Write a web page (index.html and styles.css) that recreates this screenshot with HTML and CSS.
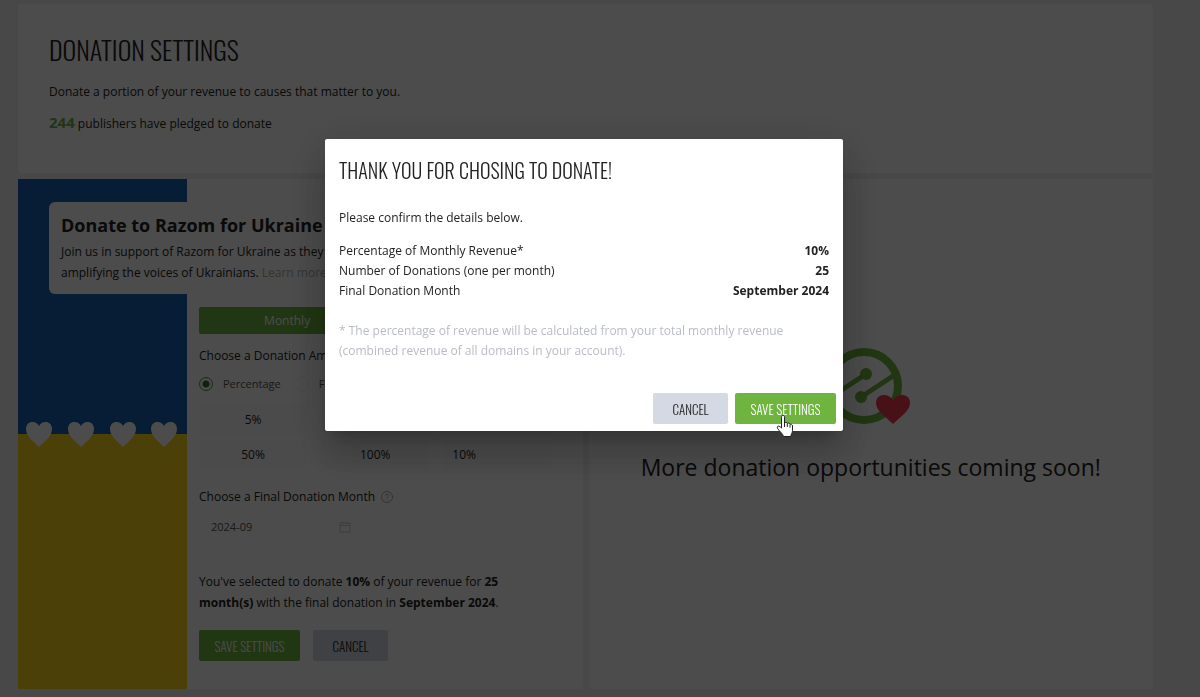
FILE: index.html
```html
<!DOCTYPE html>
<html lang="en">
<head>
    <meta charset="UTF-8">
    <meta name="viewport" content="width=device-width, initial-scale=1.0">
    <title>Donation Settings</title>
    <link rel="stylesheet" href="styles.css">
</head>
<body>
    <main class="page">
        <section class="card intro">
            <h1>Donation Settings</h1>
            <p>Donate a portion of your revenue to causes that matter to you.</p>
            <p><strong class="count">244</strong> publishers have pledged to donate</p>
        </section>

        <div class="columns">
            <section class="card campaign">
                <div class="flag">
                    <svg class="hearts" viewBox="0 0 169 27" aria-hidden="true">
                        <defs>
                            <path id="heart" d="M14 26C8 20 1 15 1 8C1 3.500 4 1 7.500 1C10.500 1 12.500 2.500 14 5C15.500 2.500 17.500 1 20.500 1C24 1 27 3.500 27 8C27 15 20 20 14 26Z"/>
                        </defs>
                        <use href="#heart" x="7"/>
                        <use href="#heart" x="49"/>
                        <use href="#heart" x="91"/>
                        <use href="#heart" x="132"/>
                    </svg>
                </div>

                <header class="campaign-header">
                    <h2>Donate to Razom for Ukraine</h2>
                    <p>Join us in support of Razom for Ukraine as they are<br>amplifying the voices of Ukrainians. <a href="#">Learn more</a></p>
                </header>

                <form class="campaign-form">
                    <div class="tabs">
                        <button type="button" class="tab active">Monthly</button>
                        <button type="button" class="tab">One Time</button>
                    </div>

                    <p class="field-title">Choose a Donation Amount</p>
                    <div class="radios">
                        <label><input type="radio" name="kind" checked> Percentage</label>
                        <label><input type="radio" name="kind"> Fixed</label>
                    </div>
                    <div class="amounts">
                        <button type="button">5%</button>
                        <button type="button">10%</button>
                        <button type="button">25%</button>
                        <button type="button">50%</button>
                        <button type="button">100%</button>
                        <input type="text" value="10%" aria-label="Other amount">
                    </div>

                    <label class="field-title" for="month">Choose a Final Donation Month
                        <svg class="help" viewBox="0 0 12 12" aria-hidden="true">
                            <circle cx="6" cy="6" r="5.500"/>
                            <path d="M4.500 4.700C4.500 2.700 7.600 2.700 7.600 4.600C7.600 5.800 6 5.800 6 7.200M6 8.300V9.200"/>
                        </svg>
                    </label>
                    <div class="month">
                        <input type="text" id="month" value="2024-09">
                        <svg viewBox="0 0 12 12" aria-hidden="true">
                            <path d="M1 2H11V11H1ZM1 4.500H11M3.500 0.500V2.500M8.500 0.500V2.500"/>
                        </svg>
                    </div>

                    <p class="summary">You've selected to donate <strong>10%</strong> of your revenue for <strong>25<br>month(s)</strong> with the final donation in <strong>September 2024</strong>.</p>

                    <div class="actions">
                        <button type="button" class="btn btn-save">Save Settings</button>
                        <button type="button" class="btn btn-cancel">Cancel</button>
                    </div>
                </form>
            </section>

            <section class="card upcoming">
                <svg class="gauge" viewBox="0 0 88 78" aria-hidden="true">
                    <circle class="ring" cx="37" cy="39" r="34"/>
                    <path class="needle" d="M7 48L39 27M34 50L66 29"/>
                    <circle class="dot" cx="39" cy="27" r="6"/>
                    <circle class="dot" cx="34" cy="50" r="6"/>
                    <path class="heart" d="M66 77C58 69 49 64 49 56C49 50 53 48 57 48C61 48 64 50 66 53C68 50 71 48 75 48C79 48 83 50 83 56C83 64 74 69 66 77Z"/>
                </svg>
                <p>More donation opportunities coming soon!</p>
            </section>
        </div>
    </main>

    <div class="overlay">
        <div class="modal" role="dialog" aria-labelledby="modal-title">
            <h2 id="modal-title">Thank you for chosing to donate!</h2>
            <p>Please confirm the details below.</p>
            <table>
                <tbody>
                    <tr><th scope="row">Percentage of Monthly Revenue*</th><td>10%</td></tr>
                    <tr><th scope="row">Number of Donations (one per month)</th><td>25</td></tr>
                    <tr><th scope="row">Final Donation Month</th><td>September 2024</td></tr>
                </tbody>
            </table>
            <p class="note">* The percentage of revenue will be calculated from your total monthly revenue<br>(combined revenue of all domains in your account).</p>
            <div class="modal-actions">
                <button type="button" class="btn btn-cancel">Cancel</button>
                <button type="button" class="btn btn-save">Save Settings
                    <svg class="pointer" viewBox="0 0 18 24" aria-hidden="true">
                        <path d="M5.500 14V3.200C5.500 0.800 8.500 0.800 8.500 3.200V9C9 7.800 11.200 8 11.300 9.600C12 8.500 14 9 14 10.500C14.800 9.800 16.500 10.300 16.500 12V16.500C16.500 19 15 20 14.800 22.500H7.500C7 20 4 18 1.500 14.300C0.500 12.500 2.600 11.300 4 12.600Z"/>
                        <path d="M8.500 9V13M11.300 9.800V13M14 10.800V13.500"/>
                    </svg>
                </button>
            </div>
        </div>
    </div>
</body>
</html>
```
FILE: styles.css
```css
* {
    box-sizing: border-box;
}
body {
    margin: 0;
    background-color: #f1f1f1;
    color: #222;
    font-family: "Open Sans", "Noto Sans", sans-serif;
    font-size: 12px;
    line-height: 20px;
}
h1, h2, p {
    margin: 0;
}
button, input {
    font: inherit;
    color: inherit;
}
.page {
    padding: 4px 47px 8px 18px;
}
.card {
    background-color: white;
    border-radius: 4px;
}
.intro {
    min-height: 169px;
    padding: 30px 31px;
}
.intro h1 {
    font-family: Oswald, "Roboto Condensed", sans-serif;
    font-size: 26px;
    font-weight: 300;
    line-height: 32px;
    text-transform: uppercase;
    margin-bottom: 15px;
}
.intro p {
    line-height: 22px;
    margin-bottom: 8px;
}
.count {
    color: #6eb43f;
    font-size: 15px;
}
.columns {
    display: grid;
    grid-template-columns: 1fr 1fr;
    gap: 6px;
    margin-top: 6px;
}

/* left card: the flag strip runs behind the campaign header */
.campaign {
    display: grid;
    grid-template-columns: 31px 138px 12px 1fr;
    grid-template-rows: 23px auto 1fr;
    padding-right: 31px;
}
.flag {
    grid-column: 1 / 3;
    grid-row: 1 / 4;
    display: flex;
    align-items: center;
    background: linear-gradient(#1a62b4 50%, #fcd51a 50%);
}
.hearts {
    width: 100%;
    fill: white;
}
.campaign-header {
    grid-column: 2 / 5;
    grid-row: 2;
    background-color: white;
    border-radius: 6px;
    padding: 11px 12px;
}
.campaign-header h2 {
    font-size: 18px;
    line-height: 24px;
    margin-bottom: 4px;
}
.campaign-header p {
    line-height: 21px;
}
.campaign-header a {
    color: #a3b59a;
    text-decoration: none;
}
.campaign-form {
    grid-column: 4;
    grid-row: 3;
    padding: 13px 0 28px;
}
.tabs {
    display: flex;
    margin-bottom: 12px;
}
.tab {
    flex: 1;
    height: 27px;
    padding: 0;
    border: none;
    background-color: #f1f1f4;
}
.tab.active {
    background-color: #6eb43f;
    color: white;
    border-radius: 2px 0 0 2px;
}
.field-title {
    display: flex;
    align-items: center;
    gap: 6px;
}
.radios {
    display: flex;
    gap: 14px;
    margin: 8px 0 11px;
    color: #555;
    font-size: 11px;
}
.radios label {
    display: flex;
    align-items: center;
    gap: 10px;
}
.radios input {
    appearance: none;
    width: 14px;
    height: 14px;
    margin: 0;
    border: 1px solid #eee;
    border-radius: 50%;
}
.radios input:checked {
    border-color: #4d9a36;
    background: radial-gradient(#3c6c2c 3px, transparent 4px);
}
.amounts {
    display: grid;
    grid-template-columns: repeat(3, 1fr);
    gap: 6px 14px;
    margin-bottom: 18px;
}
.amounts button,
.amounts input {
    min-width: 0;
    height: 29px;
    padding: 0 9px;
    border: none;
    border-radius: 2px;
    background-color: #fafafc;
}
.help {
    width: 12px;
    height: 12px;
    fill: none;
    stroke: #aaa;
    stroke-width: 1;
}
.month {
    display: flex;
    align-items: center;
    width: 164px;
    height: 32px;
    margin-top: 4px;
    padding: 0 12px;
    color: #555;
}
.month input {
    flex: 1;
    min-width: 0;
    padding: 0;
    border: none;
    background: none;
    font-size: 11px;
}
.month svg {
    width: 12px;
    height: 12px;
    fill: none;
    stroke: #ccc;
}
.summary {
    margin: 28px 0 17px;
    line-height: 21px;
}
.actions {
    display: flex;
    gap: 13px;
}
.btn {
    width: 101px;
    height: 31px;
    padding: 0;
    border: none;
    border-radius: 2px;
    font-family: Oswald, "Roboto Condensed", sans-serif;
    font-size: 13px;
    font-weight: 300;
    text-transform: uppercase;
    cursor: pointer;
}
.btn-save {
    background-color: #6eb43f;
    color: white;
}
.btn-cancel {
    width: 75px;
    background-color: #d4d9e4;
    color: #222;
}

.upcoming {
    display: flex;
    flex-direction: column;
    align-items: center;
    padding-top: 168px;
}
.upcoming p {
    margin-top: 26px;
    font-size: 23px;
    line-height: 32px;
}
.gauge {
    width: 88px;
    height: 78px;
}
.gauge .ring {
    fill: none;
    stroke: #6eb43f;
    stroke-width: 8;
}
.gauge .needle {
    fill: none;
    stroke: #6eb43f;
    stroke-width: 5;
}
.gauge .dot {
    fill: #6eb43f;
}
.gauge .heart {
    fill: #f23a4e;
}

.overlay {
    position: fixed;
    inset: 0;
    display: flex;
    justify-content: center;
    align-items: flex-start;
    padding: 139px 32px 0 0;
    background-color: rgba(0, 0, 0, 0.7);
}
.modal {
    width: 518px;
    padding: 15px 14px 7px;
    background-color: white;
    border-radius: 2px;
    box-shadow: 0 11px 15px -7px rgba(0,0,0,0.2), 0 24px 38px 3px rgba(0,0,0,0.14), 0 9px 46px 8px rgba(0,0,0,0.12);
}
.modal h2 {
    font-family: Oswald, "Roboto Condensed", sans-serif;
    font-size: 20px;
    font-weight: 300;
    line-height: 32px;
    text-transform: uppercase;
    margin-bottom: 22px;
}
.modal table {
    width: 100%;
    margin: 13px 0 20px;
    border-collapse: collapse;
}
.modal th,
.modal td {
    padding: 0;
    font-weight: normal;
    text-align: left;
}
.modal td {
    font-weight: bold;
    text-align: right;
}
.modal .note {
    color: #b9bcc4;
}
.modal-actions {
    display: flex;
    justify-content: flex-end;
    gap: 7px;
    margin: 32px -7px 0 0;
}
.modal-actions .btn-save {
    position: relative;
}
.pointer {
    position: absolute;
    left: 41px;
    top: 21px;
    width: 18px;
    height: 24px;
    fill: white;
    stroke: #222;
}
```
